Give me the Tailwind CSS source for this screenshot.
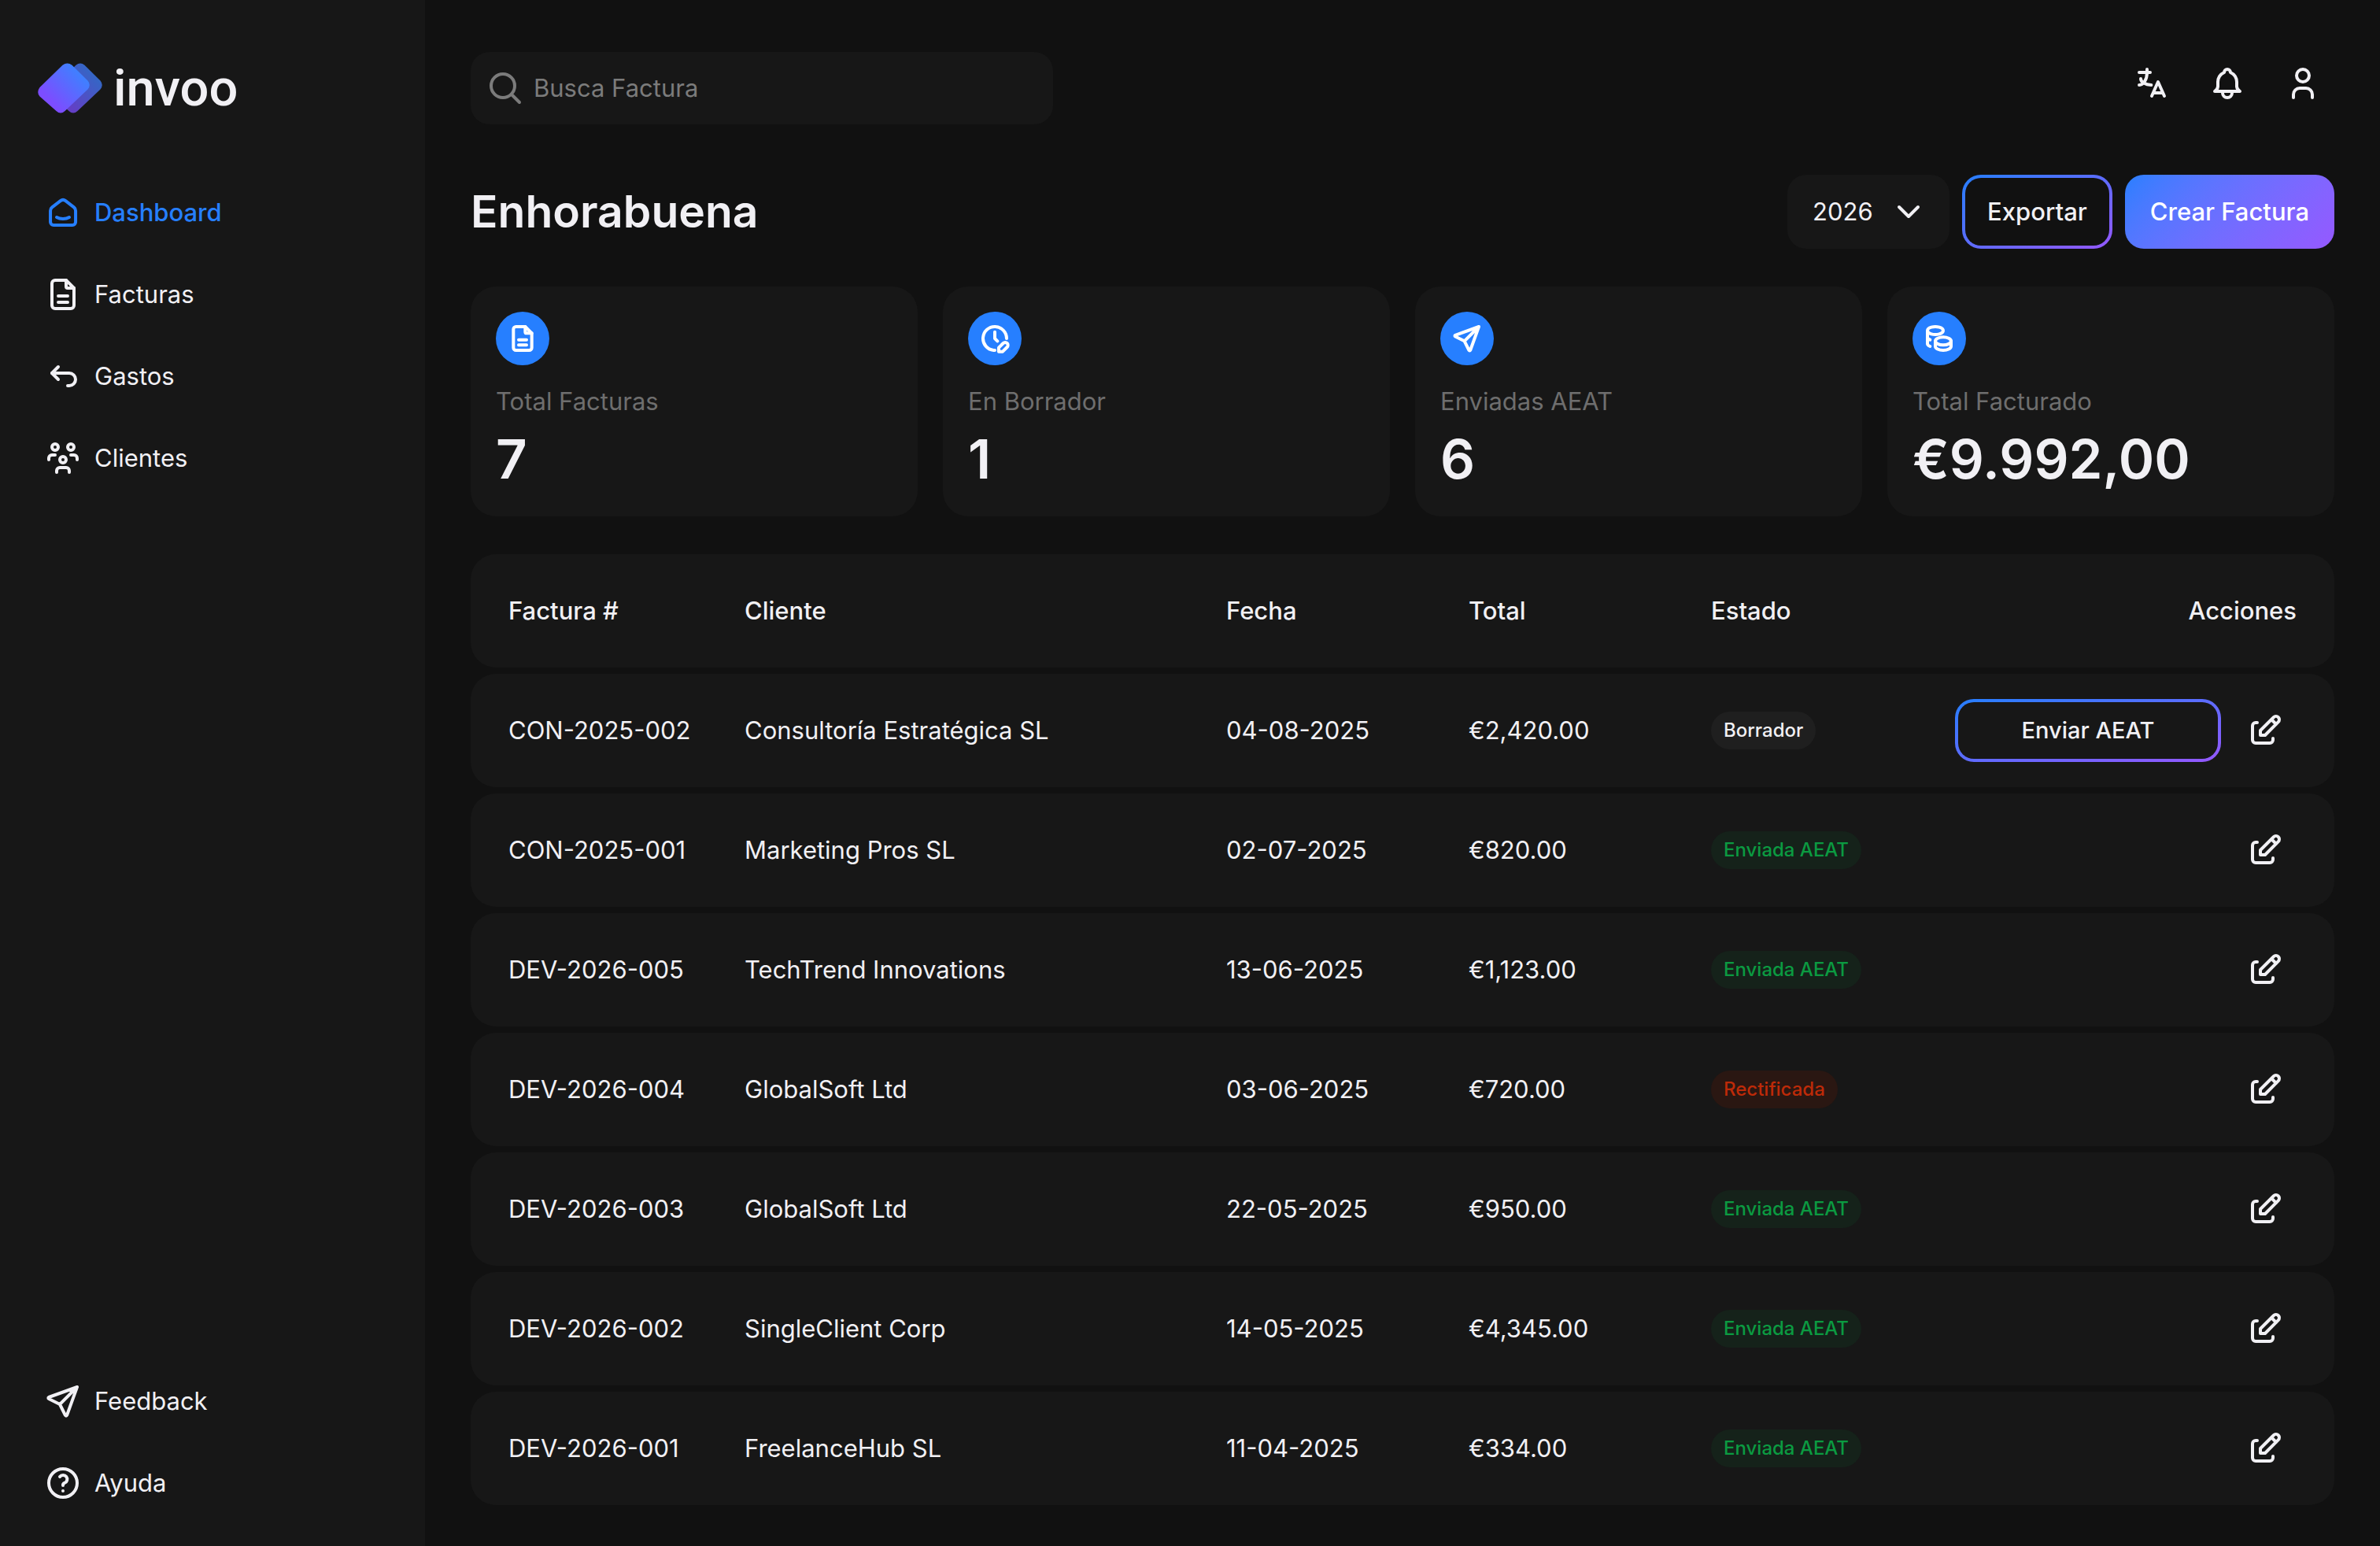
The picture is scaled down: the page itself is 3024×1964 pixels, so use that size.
<!DOCTYPE html>
<html lang="es">
<head>
  <meta charset="UTF-8" />
  <meta name="viewport" content="width=device-width, initial-scale=1.0" />
  <title>Dashboard | invoo</title>
  <script src="https://cdn.jsdelivr.net/npm/@tailwindcss/browser@4"></script>
  <style>
    body { font-family: Inter, sans-serif; }
  </style>
</head>
<body class="bg-[#111111] text-[#f1f0f4] text-[31px] leading-[48px] min-h-screen flex">

  <!-- Icon set -->
  <svg class="hidden">
    <symbol id="home" viewBox="0 0 24 24"><path d="M19 8.71l-5.333-4.148a2.666 2.666 0 0 0-3.274 0L5.059 8.71a2.665 2.665 0 0 0-1.029 2.105v7.2a2 2 0 0 0 2 2h12a2 2 0 0 0 2-2v-7.2c0-.823-.38-1.6-1.03-2.105" /><path d="M16 15c-2.21 1.333-5.792 1.333-8 0" /></symbol>
    <symbol id="file" viewBox="0 0 24 24"><path d="M14 3v4a1 1 0 0 0 1 1h4" /><path d="M17 21H7a2 2 0 0 1-2-2V5a2 2 0 0 1 2-2h7l5 5v11a2 2 0 0 1-2 2z" /><path d="M9 17h6M9 13h6" /></symbol>
    <symbol id="back" viewBox="0 0 24 24"><path d="M9 14l-4-4 4-4" /><path d="M5 10h11a4 4 0 1 1 0 8h-1" /></symbol>
    <symbol id="users" viewBox="0 0 24 24"><circle cx="12" cy="13" r="2" /><circle cx="17" cy="5" r="2" /><circle cx="7" cy="5" r="2" /><path d="M8 21v-1a2 2 0 0 1 2-2h4a2 2 0 0 1 2 2v1M17 10h2a2 2 0 0 1 2 2v1M3 13v-1a2 2 0 0 1 2-2h2" /></symbol>
    <symbol id="send" viewBox="0 0 24 24"><path d="M10 14L21 3M21 3l-6.5 18a.55.55 0 0 1-1 0L10 14l-7-3.5a.55.55 0 0 1 0-1L21 3" /></symbol>
    <symbol id="help" viewBox="0 0 24 24"><circle cx="12" cy="12" r="9" /><path d="M12 17v.01M12 13.5a1.5 1.5 0 0 1 1-1.5 2.6 2.6 0 1 0-3-4" /></symbol>
    <symbol id="search" viewBox="0 0 24 24"><circle cx="10.5" cy="10.5" r="7.5" /><path d="M21 21l-5-5" /></symbol>
    <symbol id="language" viewBox="0 0 24 24"><path d="M4 5h7M9 3v2c0 4.418-2.239 8-5 8M5 9c0 2.144 2.952 3.908 6.7 4M12 20l4-9 4 9M19.1 18h-6.2" /></symbol>
    <symbol id="bell" viewBox="0 0 24 24"><path d="M10 5a2 2 0 1 1 4 0 7 7 0 0 1 4 6v3a4 4 0 0 0 2 3H4a4 4 0 0 0 2-3v-3a7 7 0 0 1 4-6M9 17v1a3 3 0 0 0 6 0v-1" /></symbol>
    <symbol id="user" viewBox="0 0 24 24"><circle cx="12" cy="7" r="4" /><path d="M6 21v-2a4 4 0 0 1 4-4h4a4 4 0 0 1 4 4v2" /></symbol>
    <symbol id="chevron" viewBox="0 0 24 24"><path d="M6 9l6 6 6-6" /></symbol>
    <symbol id="clock" viewBox="0 0 24 24"><path d="M21 12a9 9 0 1 0-9.972 8.948c.32.034.644.052.972.052M12 7v5l2 2" /><path d="M18.42 15.61a2.1 2.1 0 0 1 2.97 2.97L18 22h-3v-3l3.42-3.39z" /></symbol>
    <symbol id="coins" viewBox="0 0 24 24"><path d="M9 14c0 1.657 2.686 3 6 3s6-1.343 6-3-2.686-3-6-3-6 1.343-6 3z" /><path d="M9 14v4c0 1.656 2.686 3 6 3s6-1.344 6-3v-4M3 6c0 1.072 1.144 2.062 3 2.598s4.144.536 6 0C13.856 8.062 15 7.072 15 6s-1.144-2.062-3-2.598-4.144-.536-6 0C4.144 3.938 3 4.928 3 6zM3 6v10c0 .888.772 1.45 2 2M3 11c0 .888.772 1.45 2 2" /></symbol>
    <symbol id="edit" viewBox="0 0 24 24"><path d="M7 7H6a2 2 0 0 0-2 2v9a2 2 0 0 0 2 2h9a2 2 0 0 0 2-2v-1" /><path d="M20.385 6.585a2.1 2.1 0 0 0-2.97-2.97L9 12v3h3l8.385-8.415zM16 5l3 3" /></symbol>
  </svg>

  <!-- Sidebar -->
  <aside class="w-[540px] shrink-0 bg-[#171717] flex flex-col justify-between pt-16 pb-7">
    <div>
      <a href="#" class="flex items-center gap-3.5 h-24 pl-12">
        <svg class="w-[82px] h-[64px]" viewBox="0 0 82 64" aria-hidden="true">
          <defs>
            <linearGradient id="mark" x1="0.85" y1="0.2" x2="0.25" y2="0.75">
              <stop offset="0" stop-color="#3d82ff" />
              <stop offset="1" stop-color="#7c4dff" />
            </linearGradient>
          </defs>
          <path d="M48.500 2.800Q54 -1.800 59.500 2.800L79.500 22.500Q84 28 79.500 33.500L50.500 61Q45 66 39.500 61L19.500 42.500Q14 37 19.500 31z" fill="url(#mark)" opacity="0.75" />
          <path d="M31.500 2.800Q37.500 -1.800 43.500 2.800L63.500 22.500Q68 28 63.500 33.500L34.500 61Q29 66 23.500 61L2.500 42.500Q-2 37 2.500 31z" fill="url(#mark)" />
        </svg>
        <span class="font-[Roboto] font-medium text-[65px] leading-[80px]">invoo</span>
      </a>
      <nav class="mt-[58px]">
        <a href="#" class="flex items-center gap-4 h-[104px] pl-14 text-[#267fff] font-medium hover:text-[#5a9dff] transition"><svg class="size-12 fill-none stroke-current stroke-2" stroke-linecap="round" stroke-linejoin="round"><use href="#home" /></svg>Dashboard</a>
        <a href="#" class="flex items-center gap-4 h-[104px] pl-14 hover:text-white transition"><svg class="size-12 fill-none stroke-current stroke-2" stroke-linecap="round" stroke-linejoin="round"><use href="#file" /></svg>Facturas</a>
        <a href="#" class="flex items-center gap-4 h-[104px] pl-14 hover:text-white transition"><svg class="size-12 fill-none stroke-current stroke-2" stroke-linecap="round" stroke-linejoin="round"><use href="#back" /></svg>Gastos</a>
        <a href="#" class="flex items-center gap-4 h-[104px] pl-14 hover:text-white transition"><svg class="size-12 fill-none stroke-current stroke-2" stroke-linecap="round" stroke-linejoin="round"><use href="#users" /></svg>Clientes</a>
      </nav>
    </div>
    <nav>
      <a href="#" class="flex items-center gap-4 h-[104px] pl-14 hover:text-white transition"><svg class="size-12 fill-none stroke-current stroke-2" stroke-linecap="round" stroke-linejoin="round"><use href="#send" /></svg>Feedback</a>
      <a href="#" class="flex items-center gap-4 h-[104px] pl-14 hover:text-white transition"><svg class="size-12 fill-none stroke-current stroke-2" stroke-linecap="round" stroke-linejoin="round"><use href="#help" /></svg>Ayuda</a>
    </nav>
  </aside>

  <!-- Main Content -->
  <main class="flex-1 min-w-0 px-[58px] pt-[66px]">
    <header class="flex items-start justify-between">
      <label class="flex items-center gap-3 w-[740px] h-[92px] pl-5 pr-6 rounded-3xl bg-[#171717] text-[#7b7b7b]">
        <svg class="size-12 shrink-0 fill-none stroke-current stroke-2" stroke-linecap="round" stroke-linejoin="round"><use href="#search" /></svg>
        <input type="search" placeholder="Busca Factura" aria-label="Busca Factura" class="flex-1 min-w-0 bg-transparent text-[#f1f0f4] placeholder:text-[#7b7b7b] focus:outline-none" />
      </label>
      <div class="flex gap-4">
        <button aria-label="Idioma" class="size-20 flex items-center justify-center"><svg class="size-12 fill-none stroke-current stroke-2" stroke-linecap="round" stroke-linejoin="round"><use href="#language" /></svg></button>
        <button aria-label="Notificaciones" class="size-20 flex items-center justify-center"><svg class="size-12 fill-none stroke-current stroke-2" stroke-linecap="round" stroke-linejoin="round"><use href="#bell" /></svg></button>
        <button aria-label="Perfil" class="size-20 flex items-center justify-center"><svg class="size-12 fill-none stroke-current stroke-2" stroke-linecap="round" stroke-linejoin="round"><use href="#user" /></svg></button>
      </div>
    </header>

    <div class="mt-16 flex items-center justify-between">
      <h1 class="text-[57px] leading-[72px] font-semibold">Enhorabuena</h1>
      <div class="flex gap-4">
        <div class="relative">
          <select aria-label="Año" class="appearance-none w-[206px] h-[94px] pl-8 rounded-3xl bg-[#171717] focus:outline-none">
            <option>2026</option>
            <option>2025</option>
          </select>
          <svg class="absolute right-7 top-[23px] size-12 pointer-events-none fill-none stroke-current stroke-2" stroke-linecap="round" stroke-linejoin="round"><use href="#chevron" /></svg>
        </div>
        <button class="h-[94px] px-7 rounded-3xl border-4 border-transparent font-medium [background:linear-gradient(#111111,#111111)_padding-box,linear-gradient(to_bottom_right,#267fff,#9558ff)_border-box]">Exportar</button>
        <button class="h-[94px] px-8 rounded-3xl font-medium text-white bg-linear-135 from-[#267fff] to-[#9558ff]">Crear Factura</button>
      </div>
    </div>

    <!-- Stats -->
    <section class="mt-12 grid grid-cols-4 gap-8">
      <div class="p-8 rounded-[32px] bg-[#171717]">
        <div class="size-[68px] rounded-full bg-[#267fff] text-white flex items-center justify-center"><svg class="size-10 fill-none stroke-current stroke-[2.4]" stroke-linecap="round" stroke-linejoin="round"><use href="#file" /></svg></div>
        <p class="mt-6 leading-[44px] text-[#6e6e6e]">Total Facturas</p>
        <p class="mt-2.5 text-[69px] leading-[82px] font-semibold">7</p>
      </div>
      <div class="p-8 rounded-[32px] bg-[#171717]">
        <div class="size-[68px] rounded-full bg-[#267fff] text-white flex items-center justify-center"><svg class="size-10 fill-none stroke-current stroke-[2.4]" stroke-linecap="round" stroke-linejoin="round"><use href="#clock" /></svg></div>
        <p class="mt-6 leading-[44px] text-[#6e6e6e]">En Borrador</p>
        <p class="mt-2.5 text-[69px] leading-[82px] font-semibold">1</p>
      </div>
      <div class="p-8 rounded-[32px] bg-[#171717]">
        <div class="size-[68px] rounded-full bg-[#267fff] text-white flex items-center justify-center"><svg class="size-10 fill-none stroke-current stroke-[2.4]" stroke-linecap="round" stroke-linejoin="round"><use href="#send" /></svg></div>
        <p class="mt-6 leading-[44px] text-[#6e6e6e]">Enviadas AEAT</p>
        <p class="mt-2.5 text-[69px] leading-[82px] font-semibold">6</p>
      </div>
      <div class="p-8 rounded-[32px] bg-[#171717]">
        <div class="size-[68px] rounded-full bg-[#267fff] text-white flex items-center justify-center"><svg class="size-10 fill-none stroke-current stroke-[2.4]" stroke-linecap="round" stroke-linejoin="round"><use href="#coins" /></svg></div>
        <p class="mt-6 leading-[44px] text-[#6e6e6e]">Total Facturado</p>
        <p class="mt-2.5 text-[69px] leading-[82px] font-semibold">€9.992,00</p>
      </div>
    </section>

    <!-- Invoices -->
    <table class="mt-10 w-full table-fixed border-separate border-spacing-x-0 border-spacing-y-2 text-left">
      <thead>
        <tr class="h-36 bg-[#171717]">
          <th class="w-[300px] pl-12 font-medium rounded-l-[32px]">Factura #</th>
          <th class="pl-12 font-medium">Cliente</th>
          <th class="w-[308px] pl-12 font-medium">Fecha</th>
          <th class="w-[308px] pl-12 font-medium">Total</th>
          <th class="w-[340px] pl-12 font-medium">Estado</th>
          <th class="w-[500px] pr-12 font-medium text-right rounded-r-[32px]">Acciones</th>
        </tr>
      </thead>
      <tbody id="invoices"></tbody>
    </table>
  </main>

  <script>
    const invoices = [
      { num: 'CON-2025-002', client: 'Consultoría Estratégica SL', date: '04-08-2025', total: '€2,420.00', status: 'Borrador' },
      { num: 'CON-2025-001', client: 'Marketing Pros SL', date: '02-07-2025', total: '€820.00', status: 'Enviada AEAT' },
      { num: 'DEV-2026-005', client: 'TechTrend Innovations', date: '13-06-2025', total: '€1,123.00', status: 'Enviada AEAT' },
      { num: 'DEV-2026-004', client: 'GlobalSoft Ltd', date: '03-06-2025', total: '€720.00', status: 'Rectificada' },
      { num: 'DEV-2026-003', client: 'GlobalSoft Ltd', date: '22-05-2025', total: '€950.00', status: 'Enviada AEAT' },
      { num: 'DEV-2026-002', client: 'SingleClient Corp', date: '14-05-2025', total: '€4,345.00', status: 'Enviada AEAT' },
      { num: 'DEV-2026-001', client: 'FreelanceHub SL', date: '11-04-2025', total: '€334.00', status: 'Enviada AEAT' },
    ];

    const badges = {
      'Borrador': 'bg-[#1f1f1f] text-[#f1f0f4]',
      'Enviada AEAT': 'bg-[#15221a] text-[#0b9a41]',
      'Rectificada': 'bg-[#2a1712] text-[#bd2a08]',
    };

    const sendButton = `<button class="w-[338px] h-20 rounded-3xl border-4 border-transparent text-[29px] font-medium [background:linear-gradient(#171717,#171717)_padding-box,linear-gradient(to_bottom_right,#267fff,#9558ff)_border-box]">Enviar AEAT</button>`;

    document.getElementById('invoices').innerHTML = invoices.map(i => `
      <tr class="h-36 bg-[#171717]">
        <td class="pl-12 rounded-l-[32px]">${i.num}</td>
        <td class="pl-12">${i.client}</td>
        <td class="pl-12">${i.date}</td>
        <td class="pl-12">${i.total}</td>
        <td class="pl-12"><span class="flex w-fit items-center h-12 px-4 rounded-full text-[24px] leading-8 font-medium ${badges[i.status]}">${i.status}</span></td>
        <td class="pr-12 rounded-r-[32px]">
          <div class="flex items-center justify-end gap-4">
            ${i.status === 'Borrador' ? sendButton : ''}
            <button aria-label="Editar ${i.num}" class="size-20 flex items-center justify-center"><svg class="size-12 fill-none stroke-current stroke-2" stroke-linecap="round" stroke-linejoin="round"><use href="#edit" /></svg></button>
          </div>
        </td>
      </tr>
    `).join('');
  </script>
</body>
</html>
